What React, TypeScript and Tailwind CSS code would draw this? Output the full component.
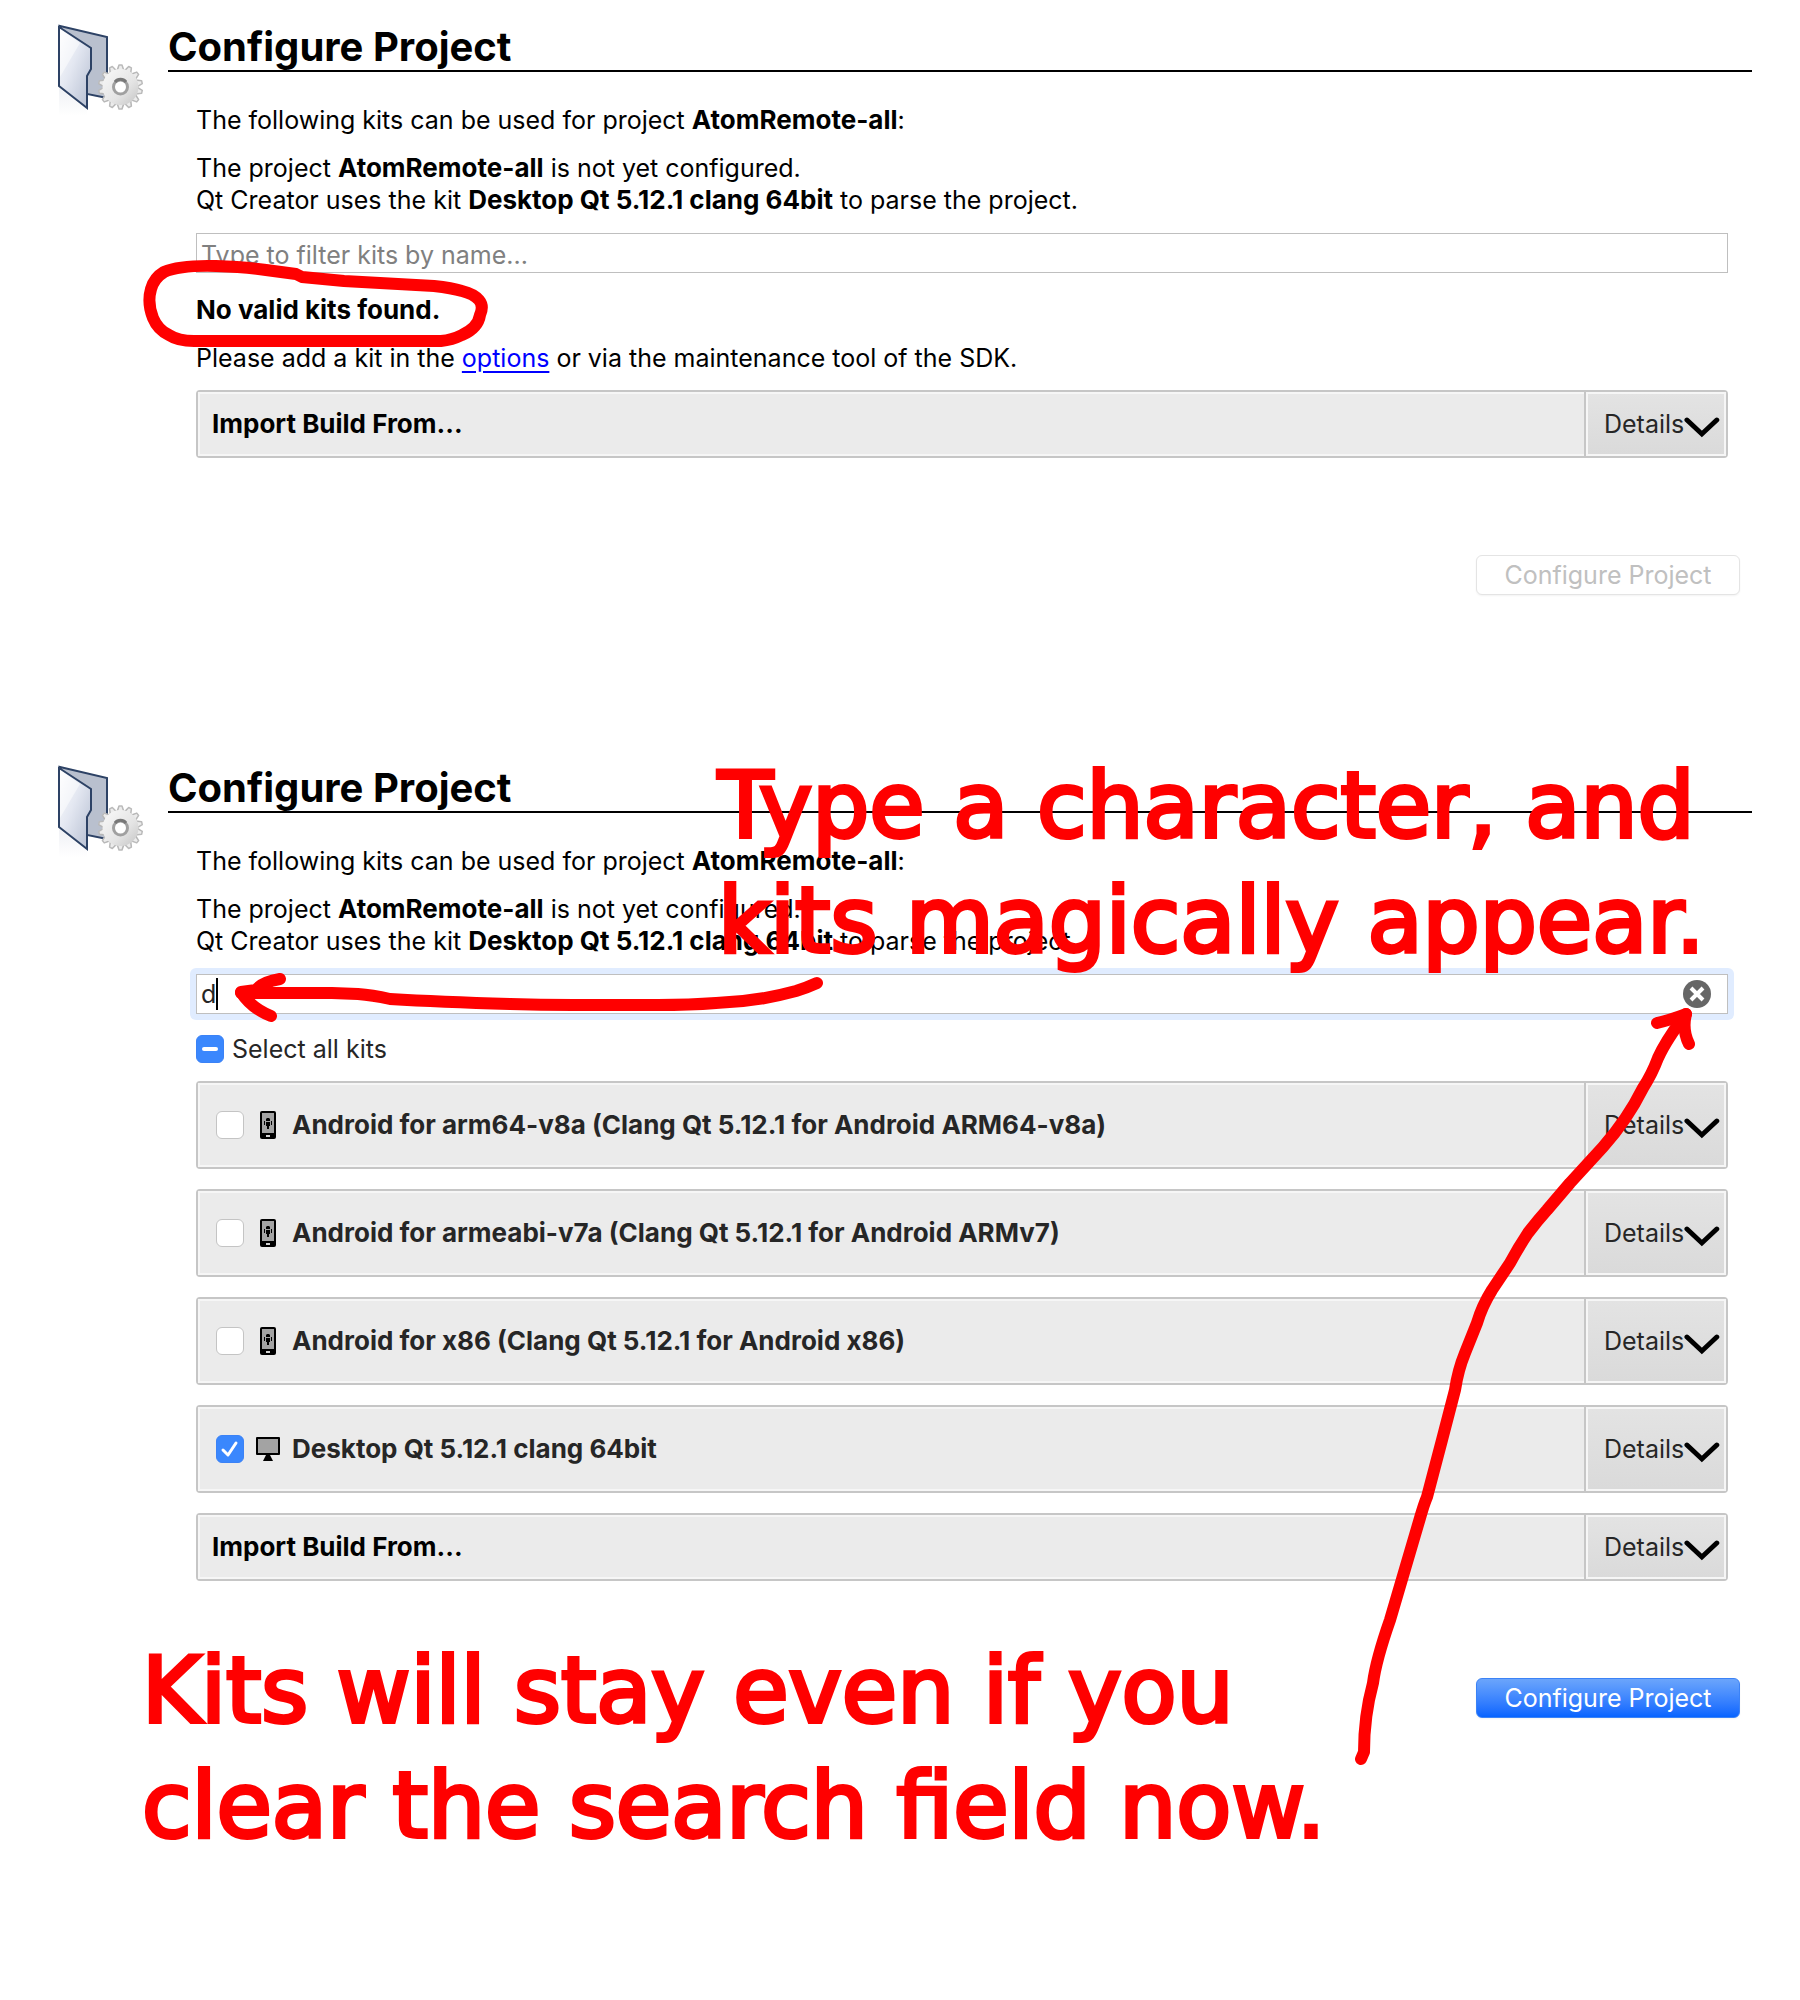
import { useState, type ReactNode } from 'react';

type Kit = {
    id: string;
    name: string;
    device: 'android' | 'desktop';
};

const PROJECT = 'AtomRemote-all';
const ACTIVE_KIT = 'Desktop Qt 5.12.1 clang 64bit';

const KITS: Kit[] = [
    { id: 'arm64', name: 'Android for arm64-v8a (Clang Qt 5.12.1 for Android ARM64-v8a)', device: 'android' },
    { id: 'armv7', name: 'Android for armeabi-v7a (Clang Qt 5.12.1 for Android ARMv7)', device: 'android' },
    { id: 'x86', name: 'Android for x86 (Clang Qt 5.12.1 for Android x86)', device: 'android' },
    { id: 'desktop', name: ACTIVE_KIT, device: 'desktop' },
];

// ============================================================
// ICONS
// ============================================================

function FolderGearIcon() {
    const teeth = Array.from({ length: 14 }, (_, i) => (i * 360) / 14);
    return (
        <svg width="88" height="92" viewBox="0 0 88 92" className="shrink-0" aria-hidden="true">
            <defs>
                <linearGradient id="cover" x1="0" y1="0" x2="1" y2="1">
                    <stop offset="0" stopColor="#ffffff" />
                    <stop offset="0.45" stopColor="#e3e7f1" />
                    <stop offset="1" stopColor="#b4bdd0" />
                </linearGradient>
                <linearGradient id="gear" x1="0" y1="0" x2="1" y2="1">
                    <stop offset="0" stopColor="#f9f9f9" />
                    <stop offset="0.6" stopColor="#e4e4e4" />
                    <stop offset="1" stopColor="#c4c4c4" />
                </linearGradient>
                <linearGradient id="tooth" gradientUnits="userSpaceOnUse" x1="80" y1="42" x2="50" y2="84">
                    <stop offset="0" stopColor="#c8c8c8" />
                    <stop offset="1" stopColor="#7d7d7d" />
                </linearGradient>
                <linearGradient id="shade" x1="0" y1="0" x2="0" y2="1">
                    <stop offset="0" stopColor="#d8dce6" />
                    <stop offset="1" stopColor="#ffffff" />
                </linearGradient>
            </defs>
            <path d="M1 64 L29 86 V92 H1 Z" fill="url(#shade)" opacity="0.4" />
            <path d="M2 2 L49 13 V74 L29 70 Z" fill="#b9c0ce" stroke="#2d4265" strokeWidth="2" />
            <path d="M1 3 L33 24 V45 L29 52 V84 L1 62 Z" fill="url(#cover)" stroke="#2d4265" strokeWidth="2" />
            <path d="M2 5 L22 19 L2 53 Z" fill="#ffffff" opacity="0.5" />
            <g fill="#ececec" stroke="url(#tooth)" strokeWidth="1.5" strokeLinejoin="round">
                {teeth.map((a) => (
                    <path key={a} d="M59 47 L61 41 H64 L66 47" transform={`rotate(${a} 62.5 63)`} />
                ))}
            </g>
            <circle cx="62.5" cy="63" r="18" fill="url(#gear)" />
            <circle cx="62.5" cy="63" r="7" fill="#ffffff" stroke="#a0a0a0" strokeWidth="3" />
            <path d="M57 58 A7 7 0 0 1 68 58" fill="none" stroke="#787878" strokeWidth="3" />
        </svg>
    );
}

function PhoneIcon() {
    return (
        <svg width="16" height="28" viewBox="0 0 16 28" aria-hidden="true">
            <rect width="16" height="28" rx="2" fill="#000" />
            <rect x="2" y="2" width="12" height="20" fill="#a3a3a3" />
            <path d="M6 8 L7 7 H9 L10 8 V10 H6 Z M4 10 H5 V14 H4 Z M6 11 H10 V15 H9 V18 H7 V15 H6 Z M11 10 H12 V14 H11 Z" fill="#000" />
            <rect x="6" y="24" width="4" height="2" fill="#d4d4d4" />
        </svg>
    );
}

function MonitorIcon() {
    return (
        <svg width="24" height="24" viewBox="0 0 24 24" aria-hidden="true">
            <rect width="24" height="18" rx="1" fill="#000" />
            <rect x="2" y="2" width="20" height="14" fill="#a3a3a3" />
            <path d="M10 18 H14 L17 24 H7 Z" fill="#000" />
        </svg>
    );
}

function ChevronIcon() {
    return (
        <svg width="36" height="22" viewBox="0 0 36 22" className="mt-2" aria-hidden="true">
            <path d="M3 3 L18 17 L33 3" fill="none" stroke="#000" strokeWidth="5" strokeLinecap="round" />
        </svg>
    );
}

// ============================================================
// CONTROLS
// ============================================================

type CheckboxProps = {
    id: string;
    checked: boolean;
    mixed?: boolean;
    onChange: () => void;
};

function Checkbox({ id, checked, mixed, onChange }: CheckboxProps) {
    return (
        <span className="relative block size-7 shrink-0">
            <input
                id={id}
                type="checkbox"
                checked={checked}
                onChange={onChange}
                className="block size-7 appearance-none rounded-md border border-[#c4c4c4] bg-white checked:border-[#3b82f6] checked:bg-[#3a87fd]"
            />
            {checked && (
                <svg viewBox="0 0 28 28" className="pointer-events-none absolute inset-0 size-7" aria-hidden="true">
                    <path
                        d={mixed ? 'M8 14 H20' : 'M7 15 L12 20 L20 8'}
                        fill="none"
                        stroke="#fff"
                        strokeWidth={mixed ? 4 : 3}
                        strokeLinecap="round"
                        strokeLinejoin="round"
                    />
                </svg>
            )}
        </span>
    );
}

function DetailsPanel({ tall, children }: { tall?: boolean; children: ReactNode }) {
    return (
        <div className={`flex rounded-sm border-2 border-[#c6c6c6] bg-[#ebebeb] ${tall ? 'h-[88px]' : 'h-[68px]'}`}>
            <div className="flex flex-1 items-center border-2 border-r-0 border-[#f6f6f6]">{children}</div>
            <button
                type="button"
                className="flex w-[140px] items-center justify-between border-2 border-[#f6f6f6] bg-linear-to-b from-[#e3e3e3] to-[#dadada] pr-1 pl-4 text-[#262626] shadow-[-2px_0_0_#c6c6c6]"
            >
                Details
                <ChevronIcon />
            </button>
        </div>
    );
}

function Bold({ children }: { children: ReactNode }) {
    return <b className="text-[26px] leading-none">{children}</b>;
}

function SetupPage({ id, children }: { id: string; children: ReactNode }) {
    return (
        <section aria-labelledby={id} className="flex h-[741px] items-start pt-6 pr-12 pl-[58px]">
            <FolderGearIcon />
            <div className="ml-[22px] flex-1">
                <h1 id={id} className="h-12 border-b-2 border-black text-[40px] leading-[46px] font-bold">
                    Configure Project
                </h1>
                <div className="pt-8 pr-6 pl-7">
                    <p>
                        The following kits can be used for project <Bold>{PROJECT}</Bold>:
                    </p>
                    <p className="mt-4">
                        The project <Bold>{PROJECT}</Bold> is not yet configured.
                        <br />
                        Qt Creator uses the kit <Bold>{ACTIVE_KIT}</Bold> to parse the project.
                    </p>
                    {children}
                </div>
            </div>
        </section>
    );
}

// ============================================================
// HAND-DRAWN NOTES
// ============================================================

function Note({ className, children }: { className: string; children: ReactNode }) {
    return (
        <p
            className={`pointer-events-none absolute font-['Chalkboard','DejaVu_Sans',sans-serif] text-[90px] leading-[115px] whitespace-nowrap text-[#ff0000] [-webkit-text-stroke:4px_#ff0000] ${className}`}
        >
            {children}
        </p>
    );
}

function PenStrokes() {
    return (
        <svg
            width="1800"
            height="2000"
            viewBox="0 0 1800 2000"
            className="pointer-events-none absolute top-0 left-0"
            fill="none"
            stroke="#ff0000"
            strokeWidth="12"
            strokeLinecap="round"
            strokeLinejoin="round"
            aria-hidden="true"
        >
            {/* loop round the empty result */}
            <path d="M164 272 Q180 265 216 266 Q245 267 266 270 L296 274 L302 277 L344 281 L398 284 L434 286 Q452 288 462 291 Q474 294 479 300 Q484 306 480 315 Q478 328 462 335 Q452 340 441 341 H194 Q178 341 169 335 Q158 330 153 318 Q147 303 151 289 Q154 278 164 272 Z" />
            {/* arrow to the filter text */}
            <path d="M817 983 Q806 988 796 991 Q756 1002 716 1003 Q690 1005 658 1005 H573 Q540 1005 510 1004 Q440 1002 390 999 Q372 995 358 994 L332 993 H241" />
            <path d="M280 979 Q262 982 256 990 L241 992 Q251 1008 271 1016" />
            {/* arrow to the clear button */}
            <path d="M1361 1759 L1364 1752 Q1364 1716 1373 1683 Q1376 1660 1390 1620 Q1404 1572 1420 1518 Q1424 1504 1427 1497 L1442 1440 L1455 1390 Q1458 1370 1465 1353 L1477 1323 Q1482 1306 1492 1290 L1510 1263 Q1518 1248 1528 1233 Q1538 1220 1547 1210 L1570 1183 L1603 1147 Q1627 1120 1643 1088 Q1652 1074 1658 1058 Q1666 1040 1686 1014" />
            <path d="M1657 1023 Q1670 1020 1686 1014 Q1682 1030 1689 1044" />
        </svg>
    );
}

// ============================================================
// PAGE
// ============================================================

export default function App() {
    const [emptyFilter, setEmptyFilter] = useState('');
    const [filter, setFilter] = useState('d');
    const [selected, setSelected] = useState<string[]>(['desktop']);

    const toggle = (id: string) =>
        setSelected((ids) => (ids.includes(id) ? ids.filter((i) => i !== id) : [...ids, id]));

    const allSelected = selected.length === KITS.length;

    return (
        <main className="relative min-h-screen overflow-hidden bg-white font-['Inter','Liberation_Sans',sans-serif] text-[25px] leading-8 text-black">
            <SetupPage id="title-empty">
                <input
                    type="text"
                    aria-label="Filter kits"
                    placeholder="Type to filter kits by name..."
                    value={emptyFilter}
                    onChange={(e) => setEmptyFilter(e.target.value)}
                    className="mt-[17px] block h-10 w-full border border-[#bfbfbf] px-1 pt-1 outline-none placeholder:text-[#808080]"
                />
                <p className="mt-[21px] text-[26px] font-bold">No valid kits found.</p>
                <p className="mt-4">
                    Please add a kit in the{' '}
                    <a href="#options" className="text-[#0000ff] underline underline-offset-4">
                        options
                    </a>{' '}
                    or via the maintenance tool of the SDK.
                </p>
                <div className="mt-4">
                    <DetailsPanel>
                        <span className="pl-3 text-[26px] font-bold">Import Build From...</span>
                    </DetailsPanel>
                </div>
                <div className="-mr-3 flex justify-end pt-[97px]">
                    <button
                        type="button"
                        disabled
                        className="h-10 w-[264px] rounded-md border border-[#e4e4e4] bg-white text-[#c0c0c0] shadow-xs"
                    >
                        Configure Project
                    </button>
                </div>
            </SetupPage>

            <SetupPage id="title-kits">
                <div className="-mx-1.5 mt-[11px] rounded-md bg-[#e0ecff] p-1.5">
                    <div className="flex h-10 items-center border border-[#bfbfbf] bg-white pr-4">
                        <span className="flex flex-1 items-center">
                            <input
                                type="text"
                                aria-label="Filter kits"
                                value={filter}
                                onChange={(e) => setFilter(e.target.value)}
                                className="field-sizing-content h-8 border-r-2 border-black pl-1 text-[#262626] outline-none"
                            />
                        </span>
                        <button type="button" aria-label="Clear" onClick={() => setFilter('')}>
                            <svg width="28" height="28" viewBox="0 0 28 28" className="block">
                                <circle cx="14" cy="14" r="14" fill="#666" />
                                <path d="M8 8 L20 20 M20 8 L8 20" stroke="#fff" strokeWidth="4" />
                            </svg>
                        </button>
                    </div>
                </div>
                <div className="mt-[13px] flex items-center gap-2 text-[#262626]">
                    <Checkbox
                        id="all-kits"
                        checked={selected.length > 0}
                        mixed={!allSelected}
                        onChange={() => setSelected(allSelected ? [] : KITS.map((k) => k.id))}
                    />
                    <label htmlFor="all-kits">Select all kits</label>
                </div>
                <div className="mt-4 flex flex-col gap-5">
                    {KITS.map((kit) => (
                        <DetailsPanel key={kit.id} tall>
                            <div className="flex items-center pl-4 text-[26px] font-bold text-[#262626]">
                                <Checkbox
                                    id={kit.id}
                                    checked={selected.includes(kit.id)}
                                    onChange={() => toggle(kit.id)}
                                />
                                <span className="ml-3 flex w-6 justify-center">
                                    {kit.device === 'android' ? <PhoneIcon /> : <MonitorIcon />}
                                </span>
                                <label htmlFor={kit.id} className="ml-3">
                                    {kit.name}
                                </label>
                            </div>
                        </DetailsPanel>
                    ))}
                    <DetailsPanel>
                        <span className="pl-3 text-[26px] font-bold">Import Build From...</span>
                    </DetailsPanel>
                </div>
                <div className="-mr-3 flex justify-end pt-[97px]">
                    <button
                        type="button"
                        className="h-10 w-[264px] rounded-md border border-[#3b82f6] bg-linear-to-b from-[#6ba5fb] to-[#0463ff] text-white shadow-xs"
                    >
                        Configure Project
                    </button>
                </div>
            </SetupPage>

            <PenStrokes />
            <Note className="top-[748px] left-[718px]">
                Type a character, and
                <br />
                kits magically appear.
            </Note>
            <Note className="top-[1633px] left-[142px]">
                Kits will stay even if you
                <br />
                clear the search field now.
            </Note>
        </main>
    );
}
